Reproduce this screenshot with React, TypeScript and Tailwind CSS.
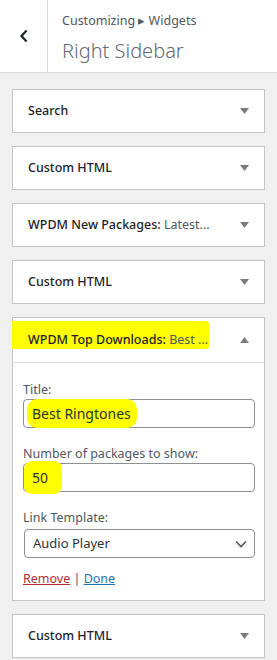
import React from "react";

const font = { fontFamily: '"Noto Sans", "Open Sans", sans-serif' };

function Arrow({ up }: { up?: boolean }) {
  return (
    <svg width="9" height="6" viewBox="0 0 9 6" className="shrink-0">
      {up ? <path d="M4.5 0L9 6H0z" fill="#787c82" /> : <path d="M0 0h9L4.5 6z" fill="#787c82" />}
    </svg>
  );
}

function Widget({ title, sub }: { title: string; sub?: string }) {
  return (
    <div className="flex h-[44px] items-center justify-between border border-[#c3c4c7] bg-white pl-[15px] pr-[15px]">
      <span className="truncate text-[12.5px] font-medium text-[#1d2327]">
        {title}
        {sub ? <span className="font-normal text-[#50575e]">{sub}</span> : null}
      </span>
      <Arrow />
    </div>
  );
}

export default function App() {
  return (
    <div className="min-h-[660px] w-[277px] bg-[#f0f0f1]" style={font}>
      <header className="flex h-[73px] border-b border-[#dcdcde] bg-white">
        <div className="flex w-[48px] items-center justify-center border-r border-[#dcdcde]">
          <svg width="10" height="14" viewBox="0 0 10 14">
            <path d="M7.5 1.5L2.5 7l5 5.5" fill="none" stroke="#1d2327" strokeWidth="2.2" />
          </svg>
        </div>
        <div className="flex flex-col justify-center pl-[14px] pt-[3px]">
          <span className="text-[12.5px] leading-[16px] text-[#50575e]">Customizing ▸ Widgets</span>
          <span className="mt-[10px] text-[20px] font-light leading-[24px] text-[#646970]">Right Sidebar</span>
        </div>
      </header>

      <div className="flex flex-col gap-[13px] px-[12px] pt-[16px]">
        <Widget title="Search" />
        <Widget title="Custom HTML" />
        <Widget title="WPDM New Packages: " sub="Latest..." />
        <Widget title="Custom HTML" />

        <div className="relative border border-[#c3c4c7] bg-white">
          <div className="absolute left-[-1px] top-[3px] h-[28px] w-[197px] rounded-r-[3px] bg-[#ffff00]" />
          <div className="relative flex h-[45px] items-center justify-between border-b border-[#dcdcde] pl-[15px] pr-[15px]">
            <span className="truncate pr-[30px] text-[12.5px] font-medium text-[#1d2327]">
              WPDM Top Downloads: <span className="font-normal text-[#50575e]">Best ...</span>
            </span>
            <Arrow up />
          </div>
          <div className="flex flex-col pl-[10px] pr-[9px] pt-[18px] pb-[12px] text-[12.5px]">
            <label className="leading-[18px] text-[#50575e]">Title:</label>
            <div className="mt-0 flex h-[29px] items-center rounded-[4px] border border-[#8c8f94] px-[8px] text-[14px] text-[#2c3338]">
              <span className="relative">
                <span className="absolute left-[-5px] right-[-6px] top-[-4px] bottom-[-4px] rounded-[10px] bg-[#ffff00]" />
                <span className="relative">Best Ringtones</span>
              </span>
            </div>
            <label className="mt-[17px] leading-[18px] text-[#50575e]">Number of packages to show:</label>
            <div className="mt-0 flex h-[29px] items-center rounded-[4px] border border-[#8c8f94] px-[8px] text-[14px] text-[#2c3338]">
              <span className="relative">
                <span className="absolute left-[-8px] right-[-14px] top-[-6px] bottom-[-6px] rounded-[8px] bg-[#ffff00]" />
                <span className="relative">50</span>
              </span>
            </div>
            <label className="mt-[17px] leading-[18px] text-[#50575e]">Link Template:</label>
            <div className="ml-[1px] mt-[2px] flex h-[29px] items-center justify-between rounded-[4px] border border-[#8c8f94] pl-[8px] pr-[7px] text-[13px] text-[#2c3338]">
              <span>Audio Player</span>
              <svg width="12" height="8" viewBox="0 0 12 8">
                <path d="M1 1.5l5 5 5-5" fill="none" stroke="#50575e" strokeWidth="1.6" />
              </svg>
            </div>
            <div className="mt-[12px] leading-[18px]">
              <span className="text-[#b32d2e] underline">Remove</span>
              <span className="text-[#50575e]"> | </span>
              <span className="text-[#2271b1] underline">Done</span>
            </div>
          </div>
        </div>

        <Widget title="Custom HTML" />
      </div>
    </div>
  );
}
